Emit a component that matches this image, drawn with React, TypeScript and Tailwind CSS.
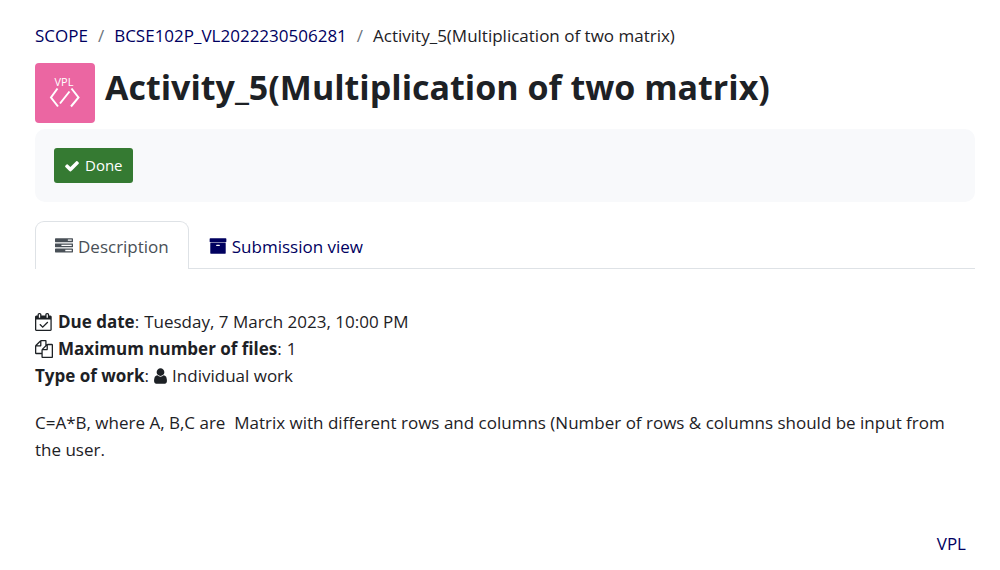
import type { ReactNode } from "react";

type IconProps = { d: string; box: string; className: string };

function Icon({ d, box, className }: IconProps) {
  return (
    <svg viewBox={box} fill="currentColor" aria-hidden="true" className={className}>
      <path d={d} />
    </svg>
  );
}

const icons = {
  check:
    "M1671 566q0 40-28 68l-724 724-136 136q-28 28-68 28t-68-28l-136-136-362-362q-28-28-28-68t28-68l136-136q28-28 68-28t68 28l294 295 656-657q28-28 68-28t68 28l136 136q28 28 28 68z",
  tasks:
    "M1024 1408h640v-128h-640v128zm-384-512h1024v-128h-1024v128zm640-512h384v-128h-384v128zm512 832v256q0 26-19 45t-45 19h-1664q-26 0-45-19t-19-45v-256q0-26 19-45t45-19h1664q26 0 45 19t19 45zm0-512v256q0 26-19 45t-45 19h-1664q-26 0-45-19t-19-45v-256q0-26 19-45t45-19h1664q26 0 45 19t19 45zm0-512v256q0 26-19 45t-45 19h-1664q-26 0-45-19t-19-45v-256q0-26 19-45t45-19h1664q26 0 45 19t19 45z",
  archive:
    "M1088 832q0-26-19-45t-45-19h-256q-26 0-45 19t-19 45 19 45 45 19h256q26 0 45-19t19-45zm576-192v960q0 26-19 45t-45 19h-1408q-26 0-45-19t-19-45v-960q0-26 19-45t45-19h1408q26 0 45 19t19 45zm64-448v256q0 26-19 45t-45 19h-1536q-26 0-45-19t-19-45v-256q0-26 19-45t45-19h1536q26 0 45 19t19 45z",
  calendar:
    "M1303 964l-512 512q-10 9-23 9t-23-9l-288-288q-9-10-9-23t9-22l46-46q9-9 22-9t23 9l220 220 444-444q10-9 23-9t22 9l46 46q9 9 9 22t-9 23zm-1175 700h1408v-1024h-1408v1024zm384-1216v-288q0-14-9-23t-23-9h-64q-14 0-23 9t-9 23v288q0 14 9 23t23 9h64q14 0 23-9t9-23zm768 0v-288q0-14-9-23t-23-9h-64q-14 0-23 9t-9 23v288q0 14 9 23t23 9h64q14 0 23-9t9-23zm384-64v1280q0 52-38 90t-90 38h-1408q-52 0-90-38t-38-90v-1280q0-52 38-90t90-38h128v-96q0-66 47-113t113-47h64q66 0 113 47t47 113v96h384v-96q0-66 47-113t113-47h64q66 0 113 47t47 113v96h128q52 0 90 38t38 90z",
  files:
    "M1696 384q40 0 68 28t28 68v1216q0 40-28 68t-68 28h-960q-40 0-68-28t-28-68v-288h-544q-40 0-68-28t-28-68v-672q0-40 20-88t48-76l408-408q28-28 76-48t88-20h416q40 0 68 28t28 68v328q68-40 128-40h416zm-544 213l-299 299h299v-299zm-640-384l-299 299h299v-299zm196 647l316-316v-416h-384v416q0 40-28 68t-68 28h-416v640h512v-256q0-40 20-88t48-76zm956 804v-1152h-384v416q0 40-28 68t-68 28h-416v640h896z",
  user:
    "M1536 1399q0 109-62.5 187t-150.5 78h-854q-88 0-150.5-78t-62.5-187q0-85 8.5-160.5t31.5-152 58.5-131 94-89 134.5-34.5q131 128 313 128t313-128q76 0 134.5 34.5t94 89 58.5 131 31.5 152 8.5 160.5zm-256-887q0 159-112.5 271.5t-271.5 112.5-271.5-112.5-112.5-271.5 112.5-271.5 271.5-112.5 271.5 112.5 112.5 271.5z",
};

const crumbs = [
  { label: "SCOPE", href: "#scope" },
  { label: "BCSE102P_VL2022230506281", href: "#course" },
  { label: "Activity_5(Multiplication of two matrix)" },
];

function Detail({ icon, label, children }: { icon?: ReactNode; label: string; children: ReactNode }) {
  return (
    <li className="flex items-center gap-[5px]">
      {icon}
      <span>
        <strong className="font-bold">{label}</strong>:
      </span>
      {children}
    </li>
  );
}

export default function App() {
  return (
    <main className="px-[25px] pt-[22px] pl-[35px] font-['Open_Sans','Noto_Sans',sans-serif] text-[17px] leading-[27px] text-[#1d2125]">
      <nav aria-label="Breadcrumb">
        <ol className="flex flex-wrap">
          {crumbs.map((crumb, i) => (
            <li key={crumb.label} className="flex">
              {i > 0 && <span className="px-[10px] text-[#6a737b]">/</span>}
              {crumb.href ? (
                <a href={crumb.href} className="text-[#00005f] hover:underline">
                  {crumb.label}
                </a>
              ) : (
                <span>{crumb.label}</span>
              )}
            </li>
          ))}
        </ol>
      </nav>

      <header className="mt-[14px] flex items-start gap-[10px]">
        <div className="size-[60px] shrink-0 rounded bg-[#eb66a2]">
          <svg viewBox="0 0 60 60" className="size-full" role="img" aria-label="VPL">
            <text x="29" y="23" textAnchor="middle" fontSize="11" fill="#fff">
              VPL
            </text>
            <path
              d="M22.5 25.5 L16 34.5 L23 43.5 M36.5 25.5 L43.5 34.5 L36 43.5 M34.5 28.5 L25 40.5"
              fill="none"
              stroke="#fff"
              strokeWidth="2"
            />
          </svg>
        </div>
        <h1 className="text-[34px] leading-[48px] font-bold">Activity_5(Multiplication of two matrix)</h1>
      </header>

      <section className="mt-[6px] rounded-[10px] bg-[#f8f9fb] p-[19px]">
        <button
          type="button"
          className="flex h-[35px] items-center gap-[5px] rounded-[3px] bg-[#357a32] px-[10px] text-[15px] text-white"
        >
          <Icon d={icons.check} box="0 0 1792 1792" className="size-4" />
          Done
        </button>
      </section>

      <nav aria-label="Activity" className="mt-[19px] flex border-b border-[#dee2e6]">
        <a
          href="#description"
          aria-current="page"
          className="-mb-px flex h-12 items-center gap-[5px] rounded-t-[9px] border border-b-0 border-[#dee2e6] bg-white px-[19px] pt-px text-[#495057]"
        >
          <Icon d={icons.tasks} box="0 0 1792 1792" className="size-[18px]" />
          Description
        </a>
        <a href="#submission" className="flex items-center gap-[5px] px-5 pt-[3px] text-[#00005f]">
          <Icon d={icons.archive} box="0 0 1792 1792" className="size-[18px]" />
          Submission view
        </a>
      </nav>

      <ul className="mt-[39px]">
        <Detail
          label="Due date"
          icon={<Icon d={icons.calendar} box="0 0 1792 1792" className="size-[18px]" />}
        >
          Tuesday, 7 March 2023, 10:00 PM
        </Detail>
        <Detail
          label="Maximum number of files"
          icon={<Icon d={icons.files} box="0 0 1792 1792" className="size-[18px]" />}
        >
          1
        </Detail>
        <Detail label="Type of work">
          <Icon d={icons.user} box="256 0 1280 1792" className="h-[18px] w-[13px]" />
          Individual work
        </Detail>
      </ul>

      <p className="mt-5">
        C=A*B, where A, B,C are&nbsp; Matrix with different rows and columns (Number of rows &amp; columns should be
        input from the user.
      </p>

      <footer className="mt-[67px] flex justify-end pr-[9px]">
        <a href="#vpl" className="text-[#00005f] hover:underline">
          VPL
        </a>
      </footer>
    </main>
  );
}
